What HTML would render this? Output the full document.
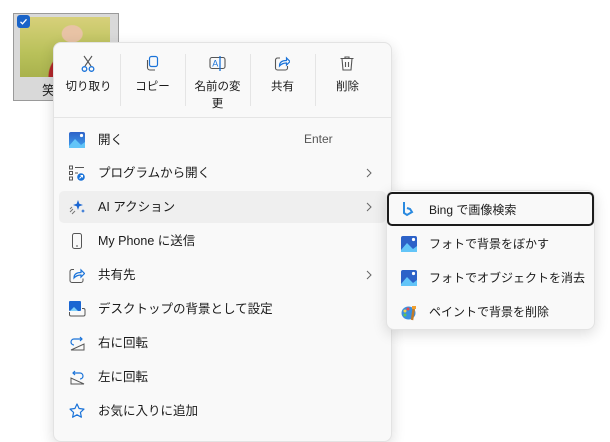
<!DOCTYPE html>
<html><head><meta charset="utf-8"><style>
*{margin:0;padding:0;box-sizing:border-box}
body{width:610px;height:430px;background:#fff;position:relative;overflow:hidden;font-family:"Liberation Sans","Noto Sans CJK JP",sans-serif;color:#1b1b1b;font-size:13px}
.abs{position:absolute}
.thumb{left:13px;top:13px;width:106px;height:88px;background:#d9d9d9;border:1px solid #9a9a9a}
.photo{left:20px;top:17px;width:90px;height:60px;background:radial-gradient(ellipse at 58% 28%,#e8c3a5 0 10px,transparent 11px),radial-gradient(ellipse at 50% 100%,#b3262a 0 16px,transparent 17px),linear-gradient(180deg,#d7d07a,#b9c15a 60%,#a9b24d)}
.chk{left:17px;top:15px;width:13px;height:13px;background:#1a64c8;border-radius:3px}
.menu{left:53px;top:42px;width:339px;height:400px;background:#f9f9f9;border:1px solid #e3e3e3;border-radius:8px;box-shadow:0 4px 14px rgba(0,0,0,.14)}
.tb{position:absolute;top:0;width:65px;text-align:center}
.tb .lbl{position:absolute;left:0;right:0;top:36px;font-size:11.5px;line-height:17px}
.tb svg{position:absolute;left:24px;top:12px}
.vs{position:absolute;top:11px;width:1px;height:52px;background:#e5e5e5}
.item{position:absolute;left:5px;width:327px;height:32px}
.item .t{position:absolute;left:39px;top:5px;font-size:12.5px;white-space:nowrap}
.item svg.i{position:absolute;left:10px;top:8px}
.arr{position:absolute;right:14px;top:11px}
.sub{left:386px;top:190px;width:209px;height:140px;background:#f9f9f9;border:1px solid #e3e3e3;border-radius:8px;box-shadow:0 4px 14px rgba(0,0,0,.14)}
.si{position:absolute;left:0;width:207px;height:33px}
.si .t{position:absolute;left:42px;top:8px;font-size:12px;white-space:nowrap}
.si svg{position:absolute;left:14px;top:9px}
</style></head><body>
<div class="abs thumb"></div>
<div class="abs photo"></div>
<div class="abs chk"><svg width="13" height="13"><path d="M3.5 6.8l2 2 4-4.5" stroke="#fff" stroke-width="1.3" fill="none"/></svg></div>
<div class="abs" style="left:42px;top:80px;font-size:13px">笑</div>

<div class="abs menu">
 <div class="tb" style="left:2px"><svg width="16" height="18" viewBox="0 0 16 18"><path d="M4 1l7 10M12 1L5 11" stroke="#555" stroke-width="1.1" fill="none"/><circle cx="4.5" cy="14" r="2.3" stroke="#1a73d9" stroke-width="1.3" fill="none"/><circle cx="11.5" cy="14" r="2.3" stroke="#1a73d9" stroke-width="1.3" fill="none"/></svg><div class="lbl">切り取り</div></div>
 <div class="vs" style="left:66px"></div>
 <div class="tb" style="left:66px"><svg width="16" height="18" viewBox="0 0 16 18"><rect x="5.5" y="1.5" width="8" height="10" rx="2" stroke="#1a73d9" stroke-width="1.2" fill="none"/><path d="M3.5 5v7.5a2.5 2.5 0 0 0 2.5 2.5h5" stroke="#555" stroke-width="1.1" fill="none"/></svg><div class="lbl">コピー</div></div>
 <div class="vs" style="left:131px"></div>
 <div class="tb" style="left:131px"><svg width="18" height="18" viewBox="0 0 18 18"><rect x="1" y="2.5" width="15" height="11" rx="2" stroke="#555" stroke-width="1.1" fill="none"/><path d="M11 1v15" stroke="#1a73d9" stroke-width="1.3"/><text x="3.2" y="11.5" font-size="9" fill="#1a73d9" font-family="Liberation Sans">A</text></svg><div class="lbl">名前の変<br>更</div></div>
 <div class="vs" style="left:196px"></div>
 <div class="tb" style="left:196px"><svg width="16" height="18" viewBox="0 0 16 18"><path d="M6 3H3.5A2 2 0 0 0 1.5 5v8a2 2 0 0 0 2 2h8a2 2 0 0 0 2-2v-2" stroke="#555" stroke-width="1.1" fill="none"/><path d="M5.5 11c0-4 3-5.5 7-5.5V3l3.5 3.5-3.5 3.5V8c-3 0-5 .7-7 3z" stroke="#1a73d9" stroke-width="1.2" fill="none"/></svg><div class="lbl">共有</div></div>
 <div class="vs" style="left:261px"></div>
 <div class="tb" style="left:261px"><svg width="16" height="18" viewBox="0 0 16 18"><path d="M1.5 3.5h13M6 3.5V2h4v1.5M3 3.5l1 11.5h8l1-11.5M6.5 7v5M9.5 7v5" stroke="#555" stroke-width="1.1" fill="none"/></svg><div class="lbl">削除</div></div>
 <div class="abs" style="left:0;right:0;top:74px;height:1px;background:#e5e5e5"></div>

 <div class="item" style="top:81px"><svg class="i" width="16" height="16"><defs><linearGradient id="g1" x1="0" y1="0" x2="0" y2="1"><stop offset="0" stop-color="#2d62c8"/><stop offset="1" stop-color="#3fa0ee"/></linearGradient></defs><rect x="0" y="0" width="16" height="16" rx="2" fill="url(#g1)"/><path d="M0 14l6-7 6 6 4-3v6H0z" fill="#63c5f8"/><circle cx="12.5" cy="3.5" r="1.6" fill="#fff"/></svg><span class="t">開く</span><span class="abs" style="left:245px;top:8px;font-size:12px;color:#555">Enter</span></div>
 <div class="item" style="top:114px"><svg class="i" width="16" height="16"><rect x=".5" y="1" width="3" height="3" fill="none" stroke="#555"/><rect x=".5" y="6.5" width="3" height="3" fill="none" stroke="#555"/><rect x=".5" y="12" width="3" height="3" fill="none" stroke="#555"/><path d="M6 2.5h9M6 8h3" stroke="#555"/><circle cx="12" cy="12" r="3.8" fill="#1a73d9"/><path d="M10.5 13.5l3-3M11.5 10.5h2v2" stroke="#fff" fill="none"/></svg><span class="t">プログラムから開く</span><svg class="arr" width="6" height="10"><path d="M1 1l4 4-4 4" stroke="#666" fill="none"/></svg></div>
 <div class="item" style="top:148px;background:#efefef;border-radius:5px"><svg class="i" width="16" height="16"><path d="M9 1l1.3 3.7L14 6l-3.7 1.3L9 11 7.7 7.3 4 6l3.7-1.3z" fill="#1a66d2"/><path d="M14 10l.6 1.4L16 12l-1.4.6L14 14l-.6-1.4L12 12l1.4-.6z" fill="#1a66d2"/><path d="M1 13l3-3M3 15l3-3M1 10l2-2" stroke="#777" stroke-width="1"/></svg><span class="t">AI アクション</span><svg class="arr" width="6" height="10"><path d="M1 1l4 4-4 4" stroke="#666" fill="none"/></svg></div>
 <div class="item" style="top:182px"><svg class="i" width="16" height="16"><rect x="3.5" y=".5" width="9" height="15" rx="2" fill="none" stroke="#555"/><path d="M7 13h2" stroke="#555"/></svg><span class="t">My Phone に送信</span></div>
 <div class="item" style="top:216px"><svg class="i" width="16" height="16"><path d="M5 2.5H3A2 2 0 0 0 1 4.5v9a2 2 0 0 0 2 2h9a2 2 0 0 0 2-2v-2" stroke="#555" fill="none"/><path d="M5 11c0-4 3-5.5 7-5.5V3l3.5 3.5L12 10V8c-3 0-5 .7-7 3z" stroke="#1a73d9" stroke-width="1.2" fill="none"/></svg><span class="t">共有先</span><svg class="arr" width="6" height="10"><path d="M1 1l4 4-4 4" stroke="#666" fill="none"/></svg></div>
 <div class="item" style="top:250px"><svg class="i" width="17" height="16"><rect x="0" y="0" width="12" height="10" rx="1" fill="#1a66d2"/><path d="M1 10l4-4 4 4z" fill="#7fd0fa"/><path d="M.5 11v2.5a1.5 1.5 0 0 0 1.5 1.5h12.5a1.5 1.5 0 0 0 1.5-1.5V9a1.5 1.5 0 0 0-1.5-1.5H13" stroke="#555" fill="none"/></svg><span class="t">デスクトップの背景として設定</span></div>
 <div class="item" style="top:284px"><svg class="i" width="16" height="16"><path d="M2 15h13V9z" stroke="#555" fill="none"/><path d="M11 2l2 2-2 2M13 4H5a3 3 0 0 0 0 6" stroke="#1a73d9" stroke-width="1.2" fill="none"/></svg><span class="t">右に回転</span></div>
 <div class="item" style="top:318px"><svg class="i" width="16" height="16"><path d="M15 15H2V9z" stroke="#555" fill="none"/><path d="M6 2L4 4l2 2M4 4h7a3 3 0 0 1 0 6" stroke="#1a73d9" stroke-width="1.2" fill="none"/></svg><span class="t">左に回転</span></div>
 <div class="item" style="top:352px"><svg class="i" width="16" height="16"><path d="M8 1l2.1 4.5 4.9.6-3.6 3.3 1 4.8L8 11.8l-4.4 2.4 1-4.8L1 6.1l4.9-.6z" stroke="#1a73d9" stroke-width="1.2" fill="none" stroke-linejoin="round"/></svg><span class="t">お気に入りに追加</span></div>
</div>

<div class="abs sub">
 <div class="si" style="top:1px;border:2px solid #1b1b1b;border-radius:5px;left:0;width:207px;height:34px"><svg width="12" height="16" style="left:13px;top:7px"><path d="M2 1v11l3 2 5-3-2-3-3-1" stroke="#2a8ae0" stroke-width="2" fill="none"/></svg><span class="t" style="left:40px;top:7px">Bing で画像検索</span></div>
 <div class="si" style="top:36px"><svg width="16" height="16"><rect width="16" height="16" rx="2" fill="#2d62c8"/><path d="M0 14l6-7 6 6 4-3v6H0z" fill="#63c5f8"/><circle cx="12.5" cy="3.5" r="1.6" fill="#fff"/></svg><span class="t">フォトで背景をぼかす</span></div>
 <div class="si" style="top:70px"><svg width="16" height="16"><rect width="16" height="16" rx="2" fill="#2d62c8"/><path d="M0 14l6-7 6 6 4-3v6H0z" fill="#63c5f8"/><circle cx="12.5" cy="3.5" r="1.6" fill="#fff"/></svg><span class="t">フォトでオブジェクトを消去</span></div>
 <div class="si" style="top:104px"><svg width="17" height="17"><ellipse cx="7.5" cy="9" rx="7" ry="6.5" fill="#3a8fe0"/><circle cx="4" cy="7" r="1.5" fill="#f7d24a"/><circle cx="7" cy="5" r="1.5" fill="#e84a4a"/><circle cx="4" cy="11" r="1.5" fill="#5cc45c"/><path d="M13 3l-2 13" stroke="#c07b2a" stroke-width="2.5"/><rect x="11" y="2" width="4" height="3" fill="#f0a030"/></svg><span class="t">ペイントで背景を削除</span></div>
</div>
</body></html>
